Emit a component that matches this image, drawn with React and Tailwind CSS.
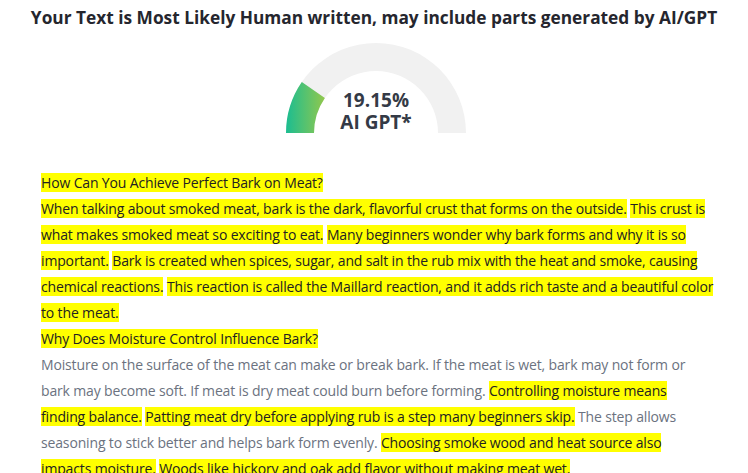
import React from "react";

const mark = "bg-[#ffff00] text-[#222]";

function Gauge({ value }) {
  // half donut, value in percent
  const a = Math.PI - (value / 100) * Math.PI;
  const ox = 90 + 90 * Math.cos(a);
  const oy = 90 - 90 * Math.sin(a);
  const ix = 90 + 62 * Math.cos(a);
  const iy = 90 - 62 * Math.sin(a);

  return (
    <div className="relative w-[180px] h-[90px]">
      <svg width="180" height="90" viewBox="0 0 180 90" className="block">
        <defs>
          <linearGradient id="g" x1="0" y1="0" x2="40" y2="0" gradientUnits="userSpaceOnUse">
            <stop offset="0" stopColor="#1bbd91" />
            <stop offset="1" stopColor="#95c84b" />
          </linearGradient>
        </defs>
        <path d="M0 90 A90 90 0 0 1 180 90 L152 90 A62 62 0 0 0 28 90 Z" fill="#f1f1f1" />
        <path
          d={`M0 90 A90 90 0 0 1 ${ox} ${oy} L${ix} ${iy} A62 62 0 0 0 28 90 Z`}
          fill="url(#g)"
        />
      </svg>
      <div className="absolute left-0 right-0 top-[46px] text-center font-bold text-[19px] leading-[22px] text-[#343a46]">
        <div>{value.toFixed(2)}%</div>
        <div>AI GPT*</div>
      </div>
    </div>
  );
}

export default function App() {
  return (
    <div
      className="w-[748px] h-[473px] overflow-hidden bg-white"
      style={{ fontFamily: '"Open Sans", "Noto Sans", sans-serif' }}
    >
      <h1 className="pt-[6px] text-center text-[17.3px] leading-[24px] font-bold text-[#25262e]">
        Your Text is Most Likely Human written, may include parts generated by AI/GPT
      </h1>

      <div className="mt-[13px] flex justify-center">
        <div className="ml-[4px]">
          <Gauge value={19.15} />
        </div>
      </div>

      <div className="mt-[37px] pl-[41px] w-[714px] text-[14px] leading-[26px] tracking-[-0.15px] text-[#6b7280]">
        <div>
          <span className={mark}>How Can You Achieve Perfect Bark on Meat?</span>
        </div>
        <div>
          <span className={mark}>
            When talking about smoked meat, bark is the dark, flavorful crust that forms on the outside.
          </span>{" "}
          <span className={mark}>This crust is what makes smoked meat so exciting to eat.</span>{" "}
          <span className={mark}>Many beginners wonder why bark forms and why it is so important.</span>{" "}
          <span className={mark}>
            Bark is created when spices, sugar, and salt in the rub mix with the heat and smoke, causing chemical
            reactions.
          </span>{" "}
          <span className={mark}>
            This reaction is called the Maillard reaction, and it adds rich taste and a beautiful color to the meat.
          </span>
        </div>
        <div>
          <span className={mark}>Why Does Moisture Control Influence Bark?</span>
        </div>
        <div>
          Moisture on the surface of the meat can make or break bark. If the meat is wet, bark may not form or bark
          may become soft. If meat is dry meat could burn before forming.{" "}
          <span className={mark}>Controlling moisture means finding balance.</span>{" "}
          <span className={mark}>Patting meat dry before applying rub is a step many beginners skip.</span> The step
          allows seasoning to stick better and helps bark form evenly.{" "}
          <span className={mark}>Choosing smoke wood and heat source also impacts moisture.</span>{" "}
          <span className={mark}>Woods like hickory and oak add flavor without making meat wet.</span>
        </div>
      </div>
    </div>
  );
}
